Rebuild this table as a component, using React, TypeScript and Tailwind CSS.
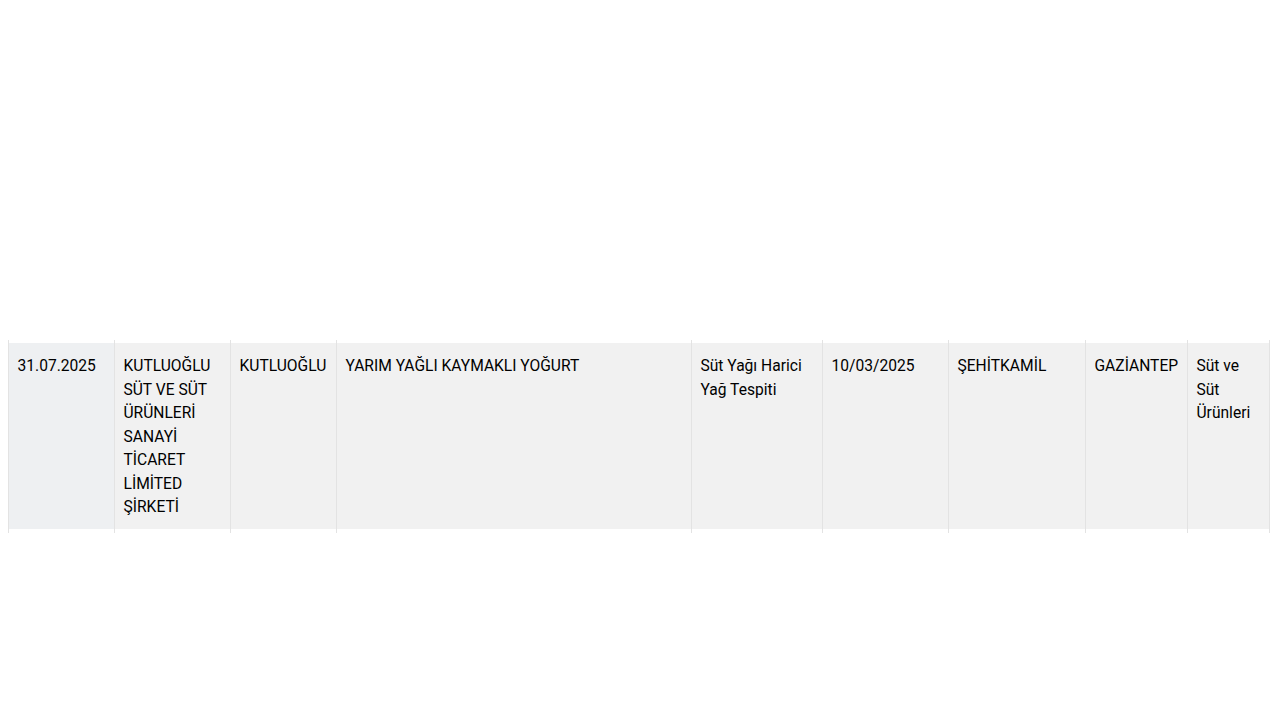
import React from "react";

const cells = [
  { w: "w-[106px]", bg: "bg-[#eef0f2]", text: "31.07.2025" },
  { w: "w-[116px]", bg: "bg-[#f1f1f1]", text: "KUTLUOĞLU SÜT VE SÜT ÜRÜNLERİ SANAYİ TİCARET LİMİTED ŞİRKETİ" },
  { w: "w-[106px]", bg: "bg-[#f1f1f1]", text: "KUTLUOĞLU" },
  { w: "w-[355px]", bg: "bg-[#f1f1f1]", text: "YARIM YAĞLI KAYMAKLI YOĞURT" },
  { w: "w-[131px]", bg: "bg-[#f1f1f1]", text: "Süt Yağı Harici Yağ Tespiti" },
  { w: "w-[126px]", bg: "bg-[#f1f1f1]", text: "10/03/2025" },
  { w: "w-[137px]", bg: "bg-[#f1f1f1]", text: "ŞEHİTKAMİL" },
  { w: "w-[102px]", bg: "bg-[#f1f1f1]", text: "GAZİANTEP" },
  { w: "w-[82px]", bg: "bg-[#f1f1f1]", text: "Süt ve Süt Ürünleri" },
];

const App = () => {
  return (
    <div className="w-[1280px] h-[720px] bg-white pt-[340px] pl-[8px] font-['Roboto',sans-serif] text-black">
      <div className="flex border-r border-[#e3e3e3] w-fit">
        {cells.map((c, i) => (
          <div key={i} className={`${c.w} shrink-0 border-l border-[#e3e3e3] pt-[3px] pb-[4px] h-[193px]`}>
            <div className={`${c.bg} h-full pl-[8.5px] pr-[6px] pt-[12px] text-[15.6px] leading-[23.5px]`}>
              {c.text}
            </div>
          </div>
        ))}
      </div>
    </div>
  );
};

export default App;
